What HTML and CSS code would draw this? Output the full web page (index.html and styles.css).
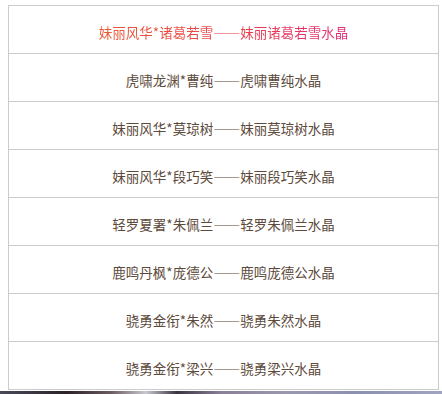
FILE: index.html
```html
<!DOCTYPE html>
<html lang="zh-CN">
<head>
<meta charset="utf-8">
<link rel="stylesheet" href="styles.css">
</head>
<body>
<div class="page">
  <ul class="list">
    <li class="row active"><span class="label">妹丽风华*诸葛若雪——妹丽诸葛若雪水晶</span></li>
    <li class="row"><span class="label">虎啸龙渊*曹纯——虎啸曹纯水晶</span></li>
    <li class="row"><span class="label">妹丽风华*莫琼树——妹丽莫琼树水晶</span></li>
    <li class="row"><span class="label">妹丽风华*段巧笑——妹丽段巧笑水晶</span></li>
    <li class="row"><span class="label">轻罗夏署*朱佩兰——轻罗朱佩兰水晶</span></li>
    <li class="row"><span class="label">鹿鸣丹枫*庞德公——鹿鸣庞德公水晶</span></li>
    <li class="row"><span class="label">骁勇金衔*朱然——骁勇朱然水晶</span></li>
    <li class="row"><span class="label">骁勇金衔*梁兴——骁勇梁兴水晶</span></li>
  </ul>
  <div class="strip"></div>
</div>
</body>
</html>
```
FILE: styles.css
```css
html, body {
  margin: 0;
  padding: 0;
  background: #fff;
}
.page {
  padding-top: 5px;
}
.list {
  list-style: none;
  margin: 0 3px 0 8px;
  padding: 0;
  border: 1px solid #cccccc;
  border-bottom: none;
}
.row {
  box-sizing: border-box;
  height: 48px;
  border-bottom: 1px solid #cccccc;
  padding: 16px 0 11px;
  text-align: center;
  font-family: "Noto Sans CJK SC", "Noto Sans", sans-serif;
  font-size: 13.5px;
  line-height: 20px;
  color: #5c4a3b;
}
.active .label {
  background: linear-gradient(90deg, #ea5a36 0%, #e8404c 55%, #e02e78 100%);
  -webkit-background-clip: text;
  background-clip: text;
  color: transparent;
}
.strip {
  margin-top: 1px;
  height: 6px;
  background: linear-gradient(90deg, #4a4a5a 0%, #2c2228 15%, #6a5a60 25%, #c8c8d0 33%, #3a3440 40%, #8a8098 50%, #9a98b0 65%, #8c90b0 80%, #a0a4c0 100%);
}
```
